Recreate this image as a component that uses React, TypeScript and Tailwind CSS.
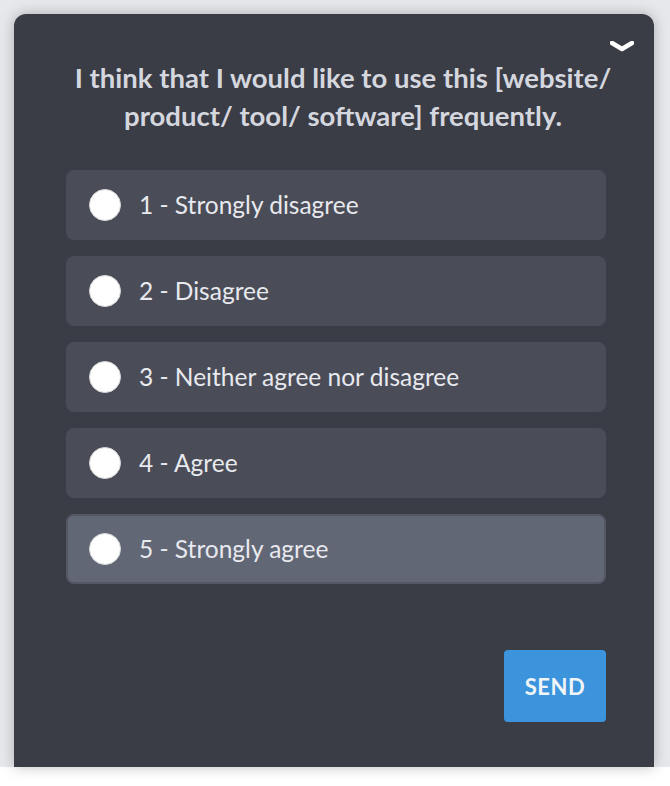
import React from 'react';

const options = [
  '1 - Strongly disagree',
  '2 - Disagree',
  '3 - Neither agree nor disagree',
  '4 - Agree',
  '5 - Strongly agree',
];

export default function App() {
  return (
    <div className="h-[786px] w-[670px] bg-white" style={{ fontFamily: 'Lato, "Noto Sans", sans-serif' }}>
      <div className="h-[767px] bg-[#e7e8ec] pl-[14px] pr-[16px] pt-[14px]">
        <div className="relative h-full rounded-t-[12px] bg-[#3a3c46] pl-[52px] pr-[48px] pt-[45px] shadow-[0_0_14px_rgba(0,0,0,0.25)]">
          <button className="absolute right-[20px] top-[27px]">
            <svg width="24" height="13" viewBox="0 0 24 13">
              <path d="M2 2 L12 8 L22 2" fill="none" stroke="#ffffff" strokeWidth="4.5" strokeLinecap="round" strokeLinejoin="round" />
            </svg>
          </button>
          <h2 className="mr-[-14px] text-center text-[27.5px] font-bold leading-[38px] text-[#d5d7df]">
            I think that I would like to use this [website/ product/ tool/ software] frequently.
          </h2>
          <div className="mt-[35px] flex flex-col gap-[16px]">
            {options.map((label, i) => (
              <label
                key={i}
                className={
                  'flex h-[70px] items-center gap-[18px] rounded-[8px] ' +
                  (i === 4 ? 'border-2 border-[#545866] bg-[#626776] px-[21px]' : 'bg-[#4a4d58] px-[23px]')
                }
              >
                <span className="h-[32px] w-[32px] shrink-0 rounded-full border border-[#d8d8d8] bg-white" />
                <span className="text-[24.5px] text-[#e8e9ee]">{label}</span>
              </label>
            ))}
          </div>
          <div className="mt-[66px] flex justify-end">
            <button className="h-[72px] w-[102px] rounded-[4px] bg-[#3c94dc] text-[22px] font-bold tracking-wide text-[#f2f5f8]">
              SEND
            </button>
          </div>
        </div>
      </div>
    </div>
  );
}
